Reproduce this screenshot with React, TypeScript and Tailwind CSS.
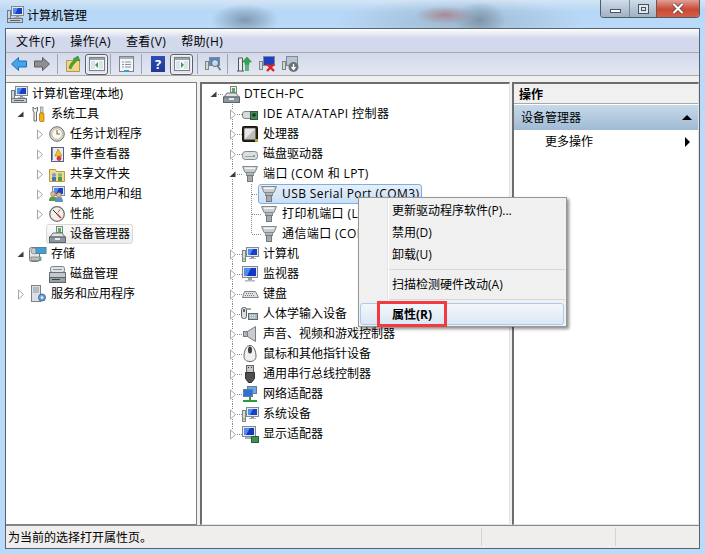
import type { ReactNode } from "react";

// small drawings of the Windows 7 icons
function Svg({ children, w = 16, h = 16 }: { children: ReactNode; w?: number; h?: number }) {
  return <svg width={w} height={h} viewBox={`0 0 ${w} ${h}`} className="shrink-0">{children}</svg>;
}

const Monitor = ({ x = 0, y = 0 }: { x?: number; y?: number }) => <g transform={`translate(${x} ${y})`}>
  <rect x="0.5" y="0.5" width="12" height="9" fill="#e4e8ec" stroke="#7f8a94" />
  <rect x="2" y="2" width="9" height="6" fill="#1c3fc4" />
  <path d="M2 2h5l-3 6H2z" fill="#4f8cf0" />
  <rect x="5" y="10" width="3" height="1" fill="#8a949c" />
  <rect x="3" y="11" width="7" height="1" fill="#a8b0b8" />
</g>;

const CompMgmt = () => <Svg w={17} h={17}>
  <Monitor x={4} y={0} />
  <rect x="0.5" y="4.5" width="3" height="8" fill="#cfd6db" stroke="#6e7a84" />
  <rect x="0.5" y="12.5" width="15" height="4" fill="#c8cdd1" stroke="#6e767c" />
  <rect x="3" y="14" width="10" height="1" fill="#5d656b" />
</Svg>;

const Tools = () => <Svg>
  <path d="M3 1v4l1 1v9h2.500V6l1-1V1L6 2.500H4.500z" fill="#eeeeee" stroke="#6d6d6d" />
  <rect x="10.500" y="1" width="2.500" height="6" fill="#cfd2d4" stroke="#777" strokeWidth=".6" />
  <rect x="9.500" y="7" width="4.500" height="8.500" rx="1" fill="#f2b015" stroke="#a36f05" strokeWidth=".7" />
</Svg>;

const Clock = () => <Svg>
  <circle cx="8" cy="8" r="7.300" fill="#d8d4c8" stroke="#6f6f6f" />
  <circle cx="8" cy="8" r="5.200" fill="#fbf8ee" stroke="#aaa" strokeWidth=".6" />
  <path d="M8 4v4h3" fill="none" stroke="#8a7440" strokeWidth="1.200" />
</Svg>;

const EventLog = () => <Svg>
  <rect x="2.500" y="1.500" width="12" height="14" fill="#e8eaf4" stroke="#57607c" />
  <path d="M2 3h2M2 5h2M2 7h2M2 9h2M2 11h2M2 13h2" stroke="#2c3350" />
  <path d="M9 3l4 7H6z" fill="#f5c422" stroke="#a37d10" strokeWidth=".6" />
  <circle cx="10" cy="12.500" r="2.400" fill="#cf3a3a" />
</Svg>;

const Shared = () => <Svg>
  <path d="M0.500 3.500h6l1 2h8v10h-15z" fill="#f3d98b" stroke="#b59848" />
  <circle cx="5" cy="9" r="2" fill="#6aa2d8" />
  <rect x="3" y="11" width="4" height="4" fill="#3f78b8" />
  <circle cx="11" cy="9" r="2" fill="#7bbf6a" />
  <rect x="9" y="11" width="4" height="4" fill="#4f984a" />
</Svg>;

const Users = () => <Svg>
  <Monitor x={3} y={0} />
  <circle cx="4" cy="8" r="2.400" fill="#e0b98c" stroke="#6c5a44" strokeWidth=".5" />
  <path d="M0 15c0-4 2-4.500 4-4.500s4 .5 4 4.500z" fill="#5d9a48" />
  <circle cx="10" cy="9" r="2.400" fill="#e0b98c" stroke="#6c5a44" strokeWidth=".5" />
  <path d="M6 16c0-4 2-4.500 4-4.500s4 .5 4 4.500z" fill="#5f8fbf" />
</Svg>;

const Gauge = () => <Svg>
  <circle cx="8" cy="8" r="7.300" fill="#f2efe8" stroke="#6f6f6f" strokeWidth="1.300" />
  <path d="M4 4l4 4" stroke="#333" strokeWidth="1" />
  <path d="M8 8l4 4" stroke="#d23030" strokeWidth="1.600" />
  <path d="M11 3.500l-2 3" stroke="#777" />
</Svg>;

const DevMgr = () => <Svg w={17} h={17}>
  <rect x="7.500" y="0.500" width="6" height="6" fill="#eef0ee" stroke="#7b8580" />
  <rect x="9" y="2" width="3" height="4" fill="#59ad5d" />
  <path d="M4 7h9l3 4H1z" fill="#dfe3e6" stroke="#6a747c" />
  <rect x="0.500" y="11" width="16" height="5.500" fill="#8c979f" stroke="#5b646a" />
  <rect x="6" y="12" width="5" height="2" fill="#e7e9ea" />
</Svg>;

const Storage = () => <Svg w={18} h={17}>
  <rect x="0.500" y="1.500" width="10" height="14" rx="2" fill="#e4e6e8" stroke="#767d82" />
  <circle cx="5" cy="5" r="3" fill="#c4c9cd" stroke="#80878c" strokeWidth=".7" />
  <rect x="7" y="1.500" width="10" height="6" fill="#3fa0d8" stroke="#5f7f99" />
  <rect x="2" y="11" width="10" height="3.500" fill="#b9bfc4" stroke="#5f666b" strokeWidth=".6" />
  <rect x="10" y="12" width="2" height="2" fill="#52b552" />
</Svg>;

const DiskMgmt = () => <Svg w={17} h={17}>
  <rect x="1.500" y="0.500" width="14" height="6" rx="2" fill="#dfe2e4" stroke="#7b8185" />
  <rect x="4" y="3" width="9" height="1" fill="#8b9196" />
  <rect x="0.500" y="6.500" width="16" height="5" fill="#c3c8cc" stroke="#6a7075" />
  <rect x="0.500" y="11.500" width="16" height="5" fill="#9aa1a6" stroke="#5d6368" />
  <rect x="3" y="13" width="8" height="1" fill="#3c4245" />
</Svg>;

const Services = () => <Svg w={17} h={18}>
  <rect x="1.500" y="0.500" width="9" height="16" fill="#dbe0e4" stroke="#79838b" />
  <path d="M3 3h6M3 5h6M3 7h6" stroke="#8b959d" />
  <circle cx="12" cy="12.500" r="3.500" fill="#6da0d0" stroke="#3d6c98" />
  <circle cx="12" cy="12.500" r="1.200" fill="#eef4fa" />
</Svg>;

const Root = DevMgr;

const Ide = () => <Svg w={17} h={16}>
  <rect x="0.500" y="5.500" width="14" height="7" rx="2.500" fill="#d7dadc" stroke="#7d8488" />
  <rect x="8.500" y="5.500" width="7" height="8" fill="#3c8f52" stroke="#2a5e39" />
  <rect x="10.500" y="7.500" width="3" height="3" fill="#1c2a20" />
</Svg>;

const Cpu = () => <Svg>
  <rect x="0.500" y="0.500" width="15" height="15" rx="1" fill="#2a2318" stroke="#15120c" />
  <rect x="2.500" y="2.500" width="11" height="11" fill="#bdbdbd" />
  <path d="M2.500 2.500h11l-11 11z" fill="#e6e6e6" />
  <rect x="13" y="13" width="3" height="3" fill="#c99f38" />
</Svg>;

const Disk = () => <Svg w={17} h={16}>
  <rect x="0.500" y="5.500" width="15" height="8" rx="3" fill="#dcdfe1" stroke="#81878b" />
  <rect x="3" y="10" width="10" height="1" fill="#9ca2a6" />
  <rect x="11" y="9" width="2" height="2" fill="#71b56f" />
</Svg>;

const Port = () => <Svg w={17} h={18}>
  <path d="M0.500 1.500h15l-2.500 6h-10z" fill="#c9cdcf" stroke="#858b8f" />
  <path d="M3 3.300h10" stroke="#f2f4f5" strokeWidth="1.600" />
  <rect x="4.500" y="7.500" width="7" height="3" fill="#b2b7ba" stroke="#858b8f" />
  <rect x="5.500" y="10.500" width="5" height="6" fill="#a5aaad" stroke="#74797d" />
</Svg>;

const Computer = () => <Svg w={17} h={16}>
  <rect x="0.500" y="4.500" width="3" height="11" fill="#d8dcd8" stroke="#7b8680" />
  <rect x="1.500" y="12" width="1" height="2" fill="#5aa457" />
  <Monitor x={4} y={1} />
</Svg>;

const Screen = () => <Svg w={17} h={16}>
  <rect x="0.500" y="0.500" width="15" height="11" fill="#e7e9eb" stroke="#7f8a94" />
  <rect x="2" y="2" width="12" height="8" fill="#1636c4" />
  <path d="M2 2h7L5 10H2z" fill="#4f8cf0" />
  <rect x="6" y="12" width="4" height="2" fill="#989fa5" />
  <rect x="3" y="14" width="10" height="1.500" fill="#b2b8bd" />
</Svg>;

const Keyboard = () => <Svg w={17} h={16}>
  <path d="M2.500 5.500h11l3 6h-16z" fill="#dfe1e3" stroke="#80858a" />
  <path d="M4 7.500h8M3 9.500h10" stroke="#7a7f84" strokeDasharray="1 1" />
</Svg>;

const Hid = () => <Svg w={18} h={16}>
  <rect x="0.500" y="1.500" width="5" height="11" rx="2" fill="#dcdfe1" stroke="#5b6166" />
  <rect x="2" y="3" width="2" height="3" fill="#62676b" />
  <path d="M6 3h4" stroke="#555" />
  <rect x="7.500" y="7.500" width="9" height="6" fill="#a9b9c0" stroke="#5f6b70" />
  <path d="M9 9.500h6M9 11.500h6" stroke="#ecf1f3" strokeDasharray="1 1" />
</Svg>;

const Speaker = () => <Svg w={16} h={18}>
  <rect x="1.500" y="6.500" width="4" height="5" fill="#b0b4b7" stroke="#777" />
  <path d="M5.500 6.500l8-5v15l-8-5z" fill="#c9cccf" stroke="#777c80" />
</Svg>;

const Mouse = () => <Svg w={16} h={18}>
  <path d="M8 0.500c4 0 6 6 6 11 0 3-2.500 5-6 5s-6-2-6-5c0-5 2-11 6-11z" fill="#f1f1f1" stroke="#5e6062" />
  <ellipse cx="8" cy="5" rx="2" ry="3.500" fill="#3b3d3f" />
</Svg>;

const Usb = () => <Svg w={16} h={18}>
  <rect x="4.500" y="0.500" width="7" height="7" fill="#c8c8c8" stroke="#666" />
  <path d="M6 2.500h1M9 2.500h1" stroke="#333" />
  <path d="M3.500 7.500h9v6l-3 4h-3l-3-4z" fill="#4d4f50" stroke="#2f3031" />
</Svg>;

const Network = () => <Svg w={17} h={17}>
  <rect x="5.500" y="0.500" width="9" height="7" fill="#6ba8e4" stroke="#5f7f99" />
  <rect x="1.500" y="3.500" width="9" height="7" fill="#2f70d8" stroke="#5f7f99" />
  <path d="M8 11v3" stroke="#2a9c3e" strokeWidth="2" />
  <path d="M1 15h14" stroke="#2a9c3e" strokeWidth="2" />
</Svg>;

const System = Computer;

const Display = () => <Svg w={17} h={17}>
  <rect x="0.500" y="0.500" width="13" height="10" fill="#e7e9eb" stroke="#7f8a94" />
  <rect x="2" y="2" width="10" height="7" fill="#1636c4" />
  <path d="M2 2h6L4 9H2z" fill="#4f8cf0" />
  <rect x="3" y="11" width="8" height="2" fill="#a8aeb3" />
  <rect x="9.500" y="10.500" width="7" height="6" fill="#3d9250" stroke="#2a5e39" />
</Svg>;

function Cell({ kind, up, down, right }: { kind?: "open" | "closed"; up?: boolean; down?: boolean; right?: boolean }) {
  const dots = "#8a8a8a";
  return <Svg w={19} h={20}>
    {up && <path d={kind ? "M9.500 0v5" : "M9.500 0v10"} stroke={dots} strokeDasharray="1 1" />}
    {down && <path d={kind ? "M9.500 15v5" : "M9.500 10v10"} stroke={dots} strokeDasharray="1 1" />}
    {right && <path d={kind ? "M14 10.500h5" : "M10 10.500h9"} stroke={dots} strokeDasharray="1 1" />}
    {kind === "open" && <path d="M12.500 7.500v5.500h-6z" fill="#3c3c3c" />}
    {kind === "closed" && <path d="M7.500 6l5 4.500-5 4.500z" fill="#fff" stroke="#a6a6a6" />}
  </Svg>;
}

function Label({ icon, text, sel }: { icon: ReactNode; text: string; sel?: "gray" | "blue" }) {
  const box = sel === "gray"
    ? "border-[#d9d9d9] bg-[linear-gradient(#fafafa,#ececec)]"
    : sel === "blue"
      ? "border-[#84acdd] bg-[linear-gradient(#e4effb,#c9dff6)]"
      : "border-transparent";
  // latin names run a little wider in the original font
  const spacing = /[A-Z]/.test(text) ? "tracking-[0.4px]" : "";
  return <div className={`-ml-[3px] flex h-5 items-center gap-[5px] rounded-[3px] border pl-[2px] pr-[2px] ${box}`}>
    <span className="flex w-4 justify-center">{icon}</span>
    <span className={`whitespace-nowrap ${spacing}`}>{text}</span>
  </div>;
}

const leftRows: { cells: ("open" | "closed" | "none")[]; icon: ReactNode; text: string; sel?: boolean }[] = [
  { cells: [], icon: <CompMgmt />, text: "计算机管理(本地)" },
  { cells: ["open"], icon: <Tools />, text: "系统工具" },
  { cells: ["none", "closed"], icon: <Clock />, text: "任务计划程序" },
  { cells: ["none", "closed"], icon: <EventLog />, text: "事件查看器" },
  { cells: ["none", "closed"], icon: <Shared />, text: "共享文件夹" },
  { cells: ["none", "closed"], icon: <Users />, text: "本地用户和组" },
  { cells: ["none", "closed"], icon: <Gauge />, text: "性能" },
  { cells: ["none", "none"], icon: <DevMgr />, text: "设备管理器", sel: true },
  { cells: ["open"], icon: <Storage />, text: "存储" },
  { cells: ["none", "none"], icon: <DiskMgmt />, text: "磁盘管理" },
  { cells: ["closed"], icon: <Services />, text: "服务和应用程序" },
];

const devices: { icon: ReactNode; text: string }[] = [
  { icon: <Computer />, text: "计算机" },
  { icon: <Screen />, text: "监视器" },
  { icon: <Keyboard />, text: "键盘" },
  { icon: <Hid />, text: "人体学输入设备" },
  { icon: <Speaker />, text: "声音、视频和游戏控制器" },
  { icon: <Mouse />, text: "鼠标和其他指针设备" },
  { icon: <Usb />, text: "通用串行总线控制器" },
  { icon: <Network />, text: "网络适配器" },
  { icon: <System />, text: "系统设备" },
  { icon: <Display />, text: "显示适配器" },
];

function Row({ children }: { children: ReactNode }) {
  return <div className="flex h-5 items-center">{children}</div>;
}

function Level1({ kind, icon, text, last }: { kind: "open" | "closed"; icon: ReactNode; text: string; last?: boolean }) {
  return <Row><span className="w-[19px]" /><Cell kind={kind} up down={!last} right /><Label icon={icon} text={text} /></Row>;
}

function PortRow({ text, last, sel }: { text: string; last?: boolean; sel?: boolean }) {
  return <Row><span className="w-[19px]" /><Cell up down /><Cell up down={!last} right /><Label icon={<Port />} text={text} sel={sel ? "blue" : undefined} /></Row>;
}

function ToolSep() {
  return <span className="block h-[20px] w-px shrink-0 bg-[#9ea4b0]" />;
}

function Toggle({ mirror }: { mirror?: boolean }) {
  return <span className="flex h-[21px] w-[23px] shrink-0 items-center justify-center rounded-[3px] border border-[#5b6068] bg-[#dfe3ec] shadow-[inset_0_0_0_1px_#f2f4f8]">
    <svg width="16" height="14" viewBox="0 0 16 14">
      <rect x="0.500" y="0.500" width="15" height="13" fill="#f7f8fb" stroke="#7c828b" />
      <rect x="1" y="1" width="14" height="2" fill="#9aa2ae" />
      <rect x="2" y="4" width="4" height="8" fill="#dde1e8" />
      <rect x="10" y="4" width="4" height="8" fill="#dde1e8" />
      <path d={mirror ? "M7 5l3 3-3 3z" : "M9 5L6 8l3 3z"} fill="#2fa24a" />
    </svg>
  </span>;
}

export default function App() {
  return <div className="relative h-[554px] w-[705px] overflow-hidden bg-[#b9daf8] font-['Open_Sans','Noto_Sans_CJK_SC',sans-serif] text-[12px] leading-none text-black">
    <div className="flex h-[28px] items-start bg-[radial-gradient(ellipse_34px_16px_at_245px_20px,#7f99b2,transparent),radial-gradient(ellipse_30px_9px_at_445px_15px,#a88a96,transparent),radial-gradient(ellipse_26px_18px_at_480px_20px,#7f96aa,transparent),radial-gradient(ellipse_125px_24px_at_460px_22px,#9db8cf,transparent),linear-gradient(#d4e5f5,#b6d7f6_40%,#b9daf8)] pl-[7px] pr-[5px]">
      <div className="mt-[6px] flex items-center gap-[3px] font-['Noto_Sans_CJK_SC',sans-serif] text-[12px]">
        <CompMgmt />
        <span>计算机管理</span>
      </div>
      <div className="ml-auto flex h-[18px] overflow-hidden rounded-b-[4px] border border-t-0 border-[#4f5c68]">
        <span className="flex w-[28px] items-end justify-center bg-[linear-gradient(#cfdcea,#9fb1c4)] pb-[4px]"><span className="h-[4px] w-[11px] border border-[#49525a] bg-white" /></span>
        <span className="flex w-[27px] items-center justify-center border-l border-[#7c8a98] bg-[linear-gradient(#cfdcea,#9fb1c4)]"><span className="flex h-[10px] w-[11px] items-center justify-center border border-[#49525a] bg-[#dfe6ed]"><span className="h-[4px] w-[5px] border border-[#49525a]" /></span></span>
        <span className="flex w-[43px] items-center justify-center border-l border-[#7c5048] bg-[linear-gradient(#e0a096,#c94a36_55%,#d55f42)]">
          <svg width="12" height="11" viewBox="0 0 12 11"><path d="M1.500 1l9 9M10.500 1l-9 9" stroke="#4d3a36" strokeWidth="3.500" /><path d="M1.500 1l9 9M10.500 1l-9 9" stroke="#fff" strokeWidth="2.200" /></svg>
        </span>
      </div>
    </div>

    <div className="mx-[5px] flex h-[521px] flex-col border border-[#59636e] bg-[#f0f0f0]">
      <div className="flex h-[24px] items-center gap-[15px] border-b border-[#a9a9a9] bg-[linear-gradient(#fbfcfd,#d3d9ec_42%,#d3d9ec)] pl-[10px] pt-[2px] tracking-[0.4px]">
        <span>文件(F)</span>
        <span>操作(A)</span>
        <span>查看(V)</span>
        <span>帮助(H)</span>
      </div>

      <div className="flex h-[23px] items-center border-b border-[#a9a9a9] bg-[linear-gradient(#d3d9ec,#e3e7f2)] pl-[5px]">
        <svg width="16" height="14" viewBox="0 0 16 14" className="shrink-0"><path d="M0.500 7l7-6.500V4h8v6h-8v3.500z" fill="#43a4ee" stroke="#1e6fb4" /></svg>
        <svg width="16" height="14" viewBox="0 0 16 14" className="ml-[7px] shrink-0"><path d="M15.500 7l-7-6.500V4h-8v6h8v3.500z" fill="#8f8f8f" stroke="#5d5d5d" /></svg>
        <span className="ml-[7px]"><ToolSep /></span>
        <svg width="15" height="16" viewBox="0 0 15 16" className="ml-[8px] shrink-0"><path d="M0.500 4.500h13v11h-13z" fill="#f1d588" stroke="#b39a4f" /><path d="M3 12C4 7 7 5 9 4L7 3l5-3 2 5-2-1c-2 2-5 4-7 9z" fill="#45a631" stroke="#2f7a1f" strokeWidth=".5" /></svg>
        <span className="ml-[4px]"><Toggle /></span>
        <span className="ml-[2px]"><ToolSep /></span>
        <svg width="15" height="16" viewBox="0 0 15 16" className="ml-[8px] shrink-0"><rect x="0.500" y="0.500" width="14" height="15" fill="#f4f5f7" stroke="#7d838b" /><rect x="1" y="1" width="13" height="2" fill="#aab0ba" /><path d="M3 6h2M6 6h6M3 8.500h2M6 8.500h6M3 11h2M6 11h6" stroke="#8b929c" /><rect x="5" y="14" width="5" height="2" fill="#34a0d8" /></svg>
        <span className="ml-[7px]"><ToolSep /></span>
        <span className="ml-[9px] flex h-4 w-[14px] shrink-0 items-center justify-center bg-[linear-gradient(#2c4fb4,#1f3a90)] text-[13px] font-bold text-white">?</span>
        <span className="ml-[5px]"><Toggle mirror /></span>
        <span className="ml-[4px]"><ToolSep /></span>
        <svg width="16" height="16" viewBox="0 0 16 16" className="ml-[7px] shrink-0"><rect x="0.500" y="5.500" width="3" height="8" fill="#d2d8d2" stroke="#7b8680" /><rect x="4.500" y="1.500" width="10" height="8" fill="#5d88c8" stroke="#7a8a99" /><circle cx="10" cy="7" r="3.500" fill="#c4dcf2" stroke="#5c6a76" /><path d="M12.500 10l3 4" stroke="#5c6a76" strokeWidth="1.500" /></svg>
        <span className="ml-[6px]"><ToolSep /></span>
        <svg width="16" height="16" viewBox="0 0 16 16" className="ml-[8px] shrink-0"><path d="M1 15h7M2.500 15V2h4v13" fill="#eceeee" stroke="#4f5559" /><path d="M11 1l4.500 5H13v2.500H9V6H6.500z" fill="#2ea84c" stroke="#1d7a36" strokeWidth=".5" /><path d="M9 10h4M9 12h4M9 14h4" stroke="#2ea84c" strokeWidth="1.300" /></svg>
        <svg width="17" height="16" viewBox="0 0 17 16" className="ml-[7px] shrink-0"><rect x="0.500" y="5.500" width="3" height="8" fill="#d2d8d2" stroke="#7b8680" /><rect x="4.500" y="0.500" width="11" height="9" fill="#1c3fc4" stroke="#7a8a99" /><path d="M8 8l7 7M15 8l-7 7" stroke="#e02020" strokeWidth="2.400" /></svg>
        <svg width="17" height="16" viewBox="0 0 17 16" className="ml-[6px] shrink-0"><rect x="0.500" y="5.500" width="3" height="8" fill="#d2d8d2" stroke="#7b8680" /><rect x="4.500" y="0.500" width="11" height="9" fill="#b8c4d2" stroke="#7a8a99" /><circle cx="11.500" cy="11" r="5" fill="#6b7278" /><path d="M11.500 8v5M9.500 11l2 2.500 2-2.500" stroke="#fff" strokeWidth="1.300" fill="none" /></svg>
      </div>

      <div className="flex min-h-0 flex-1 pt-[6px]">
        <div className="w-[191px] shrink-0 border-t border-r border-b border-[#7f7f7f] bg-white pl-[5px] pt-px">
          {leftRows.map((row) => <Row key={row.text}>
            {row.cells.map((c, i) => <Cell key={i} kind={c === "none" ? undefined : c} />)}
            <Label icon={row.icon} text={row.text} sel={row.sel ? "gray" : undefined} />
          </Row>)}
        </div>

        <div className="ml-[3px] w-[310px] shrink-0 border-t-2 border-l-2 border-r border-b border-t-[#6d6d6d] border-l-[#6d6d6d] border-r-[#e3e3e3] border-b-[#e3e3e3] bg-white pl-[2px]">
          <Row><Cell kind="open" right /><Label icon={<Root />} text="DTECH-PC" /></Row>
          <Level1 kind="closed" icon={<Ide />} text="IDE ATA/ATAPI 控制器" />
          <Level1 kind="closed" icon={<Cpu />} text="处理器" />
          <Level1 kind="closed" icon={<Disk />} text="磁盘驱动器" />
          <Level1 kind="open" icon={<Port />} text="端口 (COM 和 LPT)" />
          <PortRow text="USB Serial Port (COM3)" sel />
          <PortRow text="打印机端口 (LPT1)" />
          <PortRow text="通信端口 (COM1)" last />
          {devices.map((d, i) => <Level1 key={d.text} kind="closed" icon={d.icon} text={d.text} last={i === devices.length - 1} />)}
        </div>

        <div className="ml-[2px] min-w-0 flex-1 border-t-2 border-l-2 border-r border-b border-t-[#6d6d6d] border-l-[#6d6d6d] border-r-[#e3e3e3] border-b-[#e3e3e3] bg-white">
          <div className="flex h-[20px] items-center border-b border-[#a9a9a9] bg-[#f0f0f0] pl-[5px] pt-[2px] font-bold">操作</div>
          <div className="mt-[1px] flex h-[25px] items-center justify-between bg-[linear-gradient(#c6d9ea,#a0bad4)] pl-[7px] pr-[6px]">
            <span>设备管理器</span>
            <span className="h-0 w-0 border-x-[5px] border-b-[5px] border-x-transparent border-b-black" />
          </div>
          <div className="flex h-[22px] items-center justify-between pl-[31px] pr-[8px] pt-[2px]">
            <span>更多操作</span>
            <span className="h-0 w-0 border-y-[5px] border-l-[5px] border-y-transparent border-l-black" />
          </div>
        </div>
      </div>

      <div className="flex h-[23px] items-center border-t border-[#8a8a8a] bg-[#f0eded]">
        <span className="w-[475px] pl-[2px] pt-[2px]">为当前的选择打开属性页。</span>
        <span className="h-[18px] w-[134px] border-l border-[#d6d3d3]" />
        <span className="h-[18px] flex-1 border-l border-[#d6d3d3]" />
      </div>
    </div>

    {/* context menu */}
    <div className="absolute left-[358px] top-[197px] w-[209px] border border-[#979797] bg-[linear-gradient(90deg,#f0f0f0_28px,#e2e3e3_28px,#e2e3e3_29px,#fff_29px,#fff_30px,#f0f0f0_30px)] p-px shadow-[2px_2px_3px_rgba(0,0,0,0.45)]">
      <div className="flex h-[22px] items-center pl-[32px] pt-[2px]">更新驱动程序软件(P)...</div>
      <div className="flex h-[22px] items-center pl-[32px] pt-[2px]">禁用(D)</div>
      <div className="flex h-[22px] items-center pl-[32px] pt-[2px]">卸载(U)</div>
      <div className="flex h-2 items-center pl-[29px]"><span className="h-px w-full bg-[#d7d7d7]" /></div>
      <div className="flex h-[22px] items-center pl-[32px] pt-[2px]">扫描检测硬件改动(A)</div>
      <div className="flex h-2 items-center pl-[29px]"><span className="h-px w-full bg-[#d7d7d7]" /></div>
      <div className="mr-px flex h-[22px] items-center rounded-[3px] border border-[#a9cbee] bg-[linear-gradient(#f3f7fc,#dbe7f5)] pl-[31px] pt-[2px] font-bold">属性(R)</div>
    </div>
    <div className="absolute left-[377px] top-[301px] h-[26px] w-[70px] border-[3px] border-[#f23a40]" />
  </div>;
}
